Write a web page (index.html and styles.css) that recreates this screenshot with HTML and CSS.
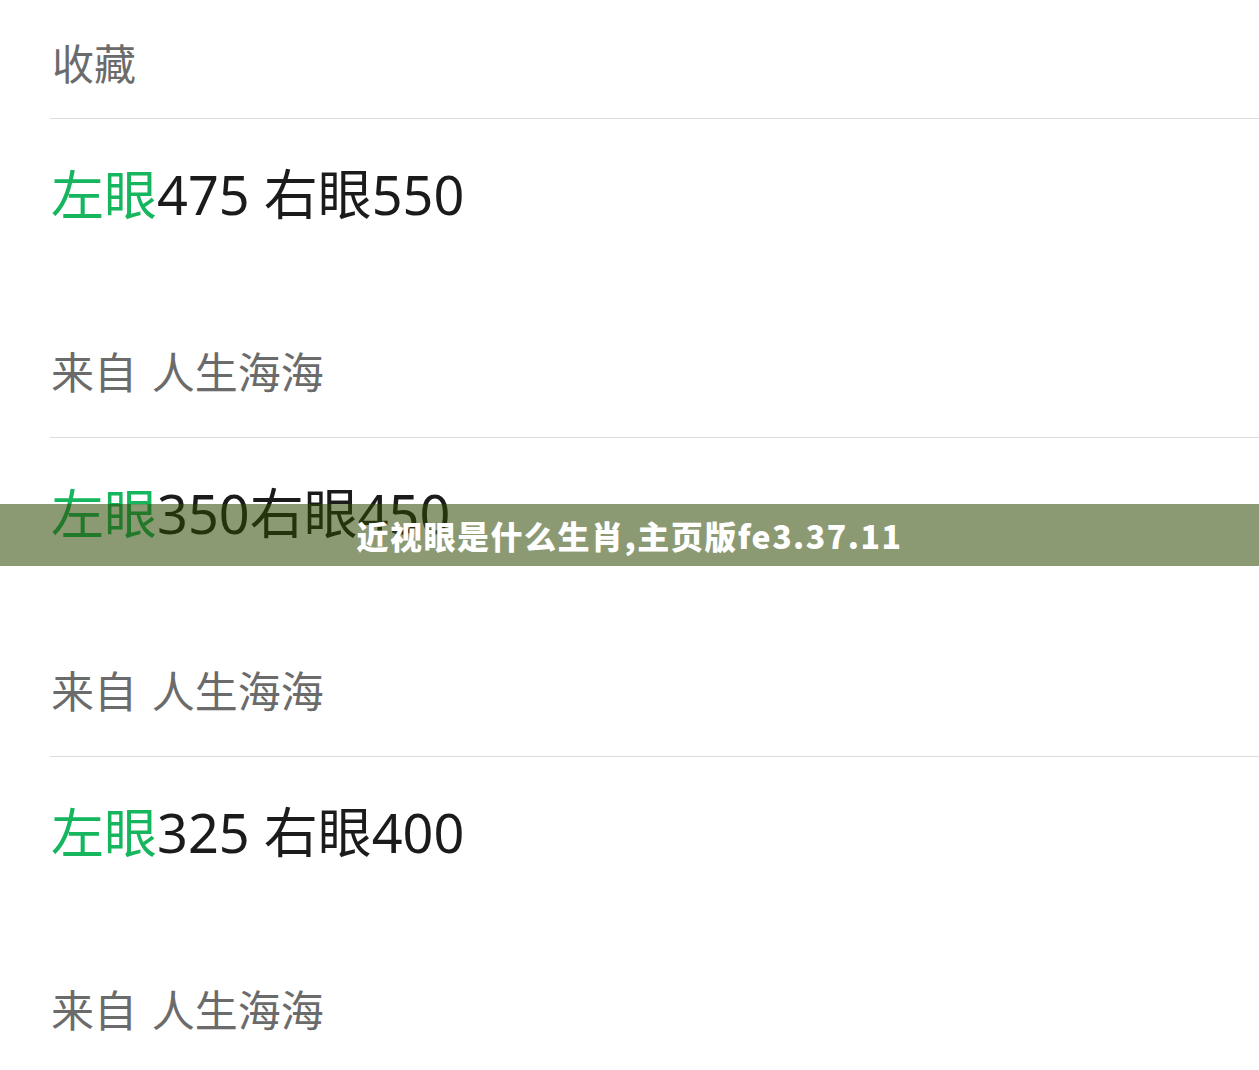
FILE: index.html
```html
<!DOCTYPE html>
<html lang="zh-CN">
<head>
    <meta charset="UTF-8">
    <meta name="viewport" content="width=device-width, initial-scale=1.0">
    <title>收藏</title>
    <link rel="stylesheet" href="styles.css">
</head>
<body>
    <!-- 收藏列表 -->
    <div class="page">
        <div class="header">收藏</div>

        <div class="item">
            <div class="title"><span class="hl">左眼</span>475 右眼550</div>
            <div class="source">来自 人生海海</div>
        </div>

        <div class="item">
            <div class="title"><span class="hl">左眼</span>350右眼450</div>
            <div class="source">来自 人生海海</div>
        </div>

        <div class="item">
            <div class="title"><span class="hl">左眼</span>325 右眼400</div>
            <div class="source">来自 人生海海</div>
        </div>
    </div>

    <!-- 标题条 -->
    <div class="banner">近视眼是什么生肖,主页版fe3.37.11</div>
</body>
</html>
```

FILE: styles.css
```css
/* 全局 */
body {
    margin: 0;
    padding: 0;
    background: #fff;
    font-family: "Noto Sans", "Noto Sans CJK SC", sans-serif;
    overflow: hidden;
}

.page {
    padding-left: 50px;
}

.header {
    font-size: 42px;
    line-height: 60px;
    padding: 32px 0 26px 2px;
    color: #6b6b6b;
    font-family: "Noto Sans CJK SC", sans-serif;
}

.item {
    border-top: 1px solid #dcdcdc;
    padding: 45px 0 42px 1px;
}

.title {
    font-size: 54px;
    line-height: 56px;
    color: #1b1b1b;
    height: 56px;
    white-space: nowrap;
}

.title .hl {
    color: #15b65e;
    font-family: "Noto Sans CJK SC", sans-serif;
    font-size: 53px;
}

.source {
    margin-top: 125px;
    font-size: 43px;
    line-height: 50px;
    height: 50px;
    color: #6b6b6b;
    font-family: "Noto Sans CJK SC", sans-serif;
    word-spacing: 5px;
}

.banner {
    position: absolute;
    top: 504px;
    left: 0;
    right: 0;
    height: 62px;
    line-height: 62px;
    background: rgba(45, 71, 0, 0.55);
    color: #fff;
    text-align: center;
    font-family: "Noto Sans CJK SC", sans-serif;
    font-weight: 900;
    font-size: 32px;
    letter-spacing: 1.5px;
}
```
